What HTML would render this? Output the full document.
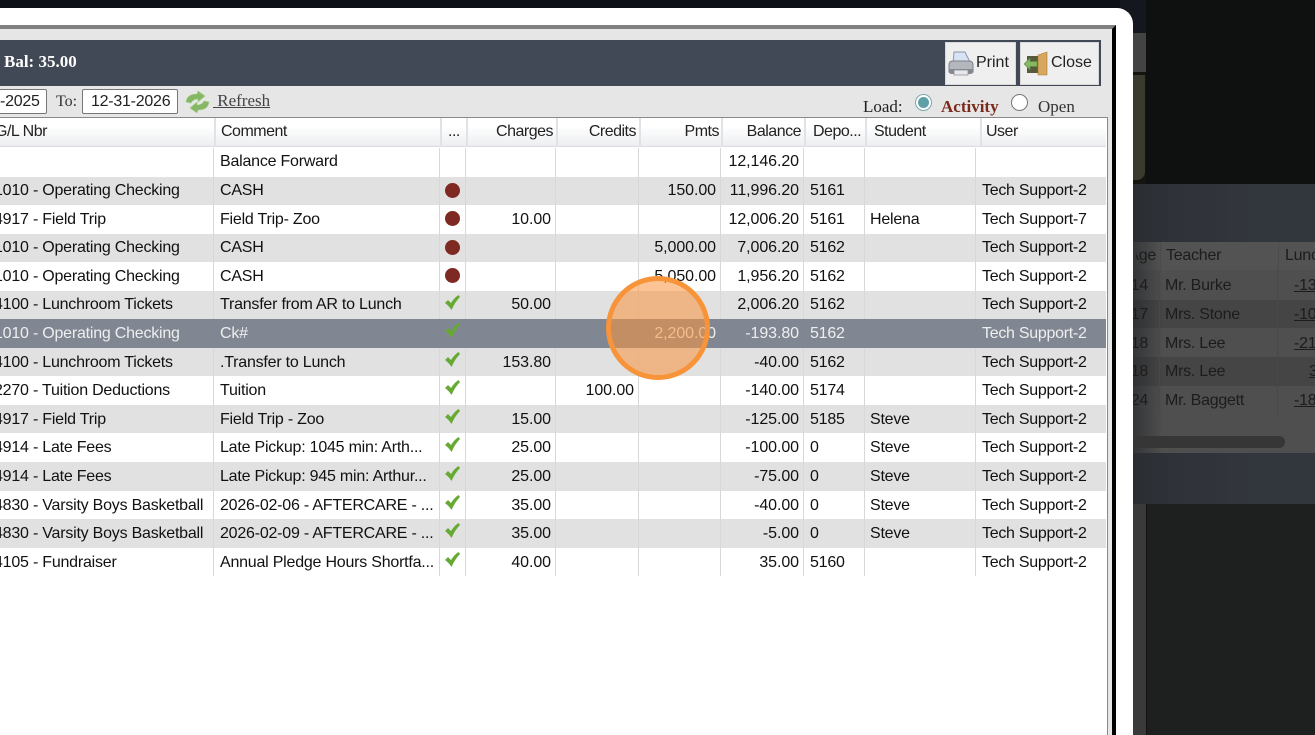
<!DOCTYPE html>
<html><head><meta charset="utf-8"><style>
html,body{margin:0;padding:0;width:1315px;height:735px;overflow:hidden;background:#0f1110}
*{box-sizing:border-box}
.a{position:absolute}
#page{position:relative;width:1315px;height:735px;overflow:hidden;font-family:"Liberation Sans",sans-serif;font-size:16px;color:#111}
.s{font-family:"Liberation Serif",serif;font-size:17px}
.r{position:absolute;left:0;width:1106px;height:29px;background:#fff}
.r.g{background:#e1e1e1}
.r.sel{background:#808793;color:#eee}
.r span{position:absolute;top:4px;line-height:20px;white-space:nowrap;letter-spacing:-.22px}
.r.d span{top:5px}
.c1{left:-6px}.c2{left:220px}
.c4{right:555px}.c5{right:472px}.c6{right:390px}.c7{right:307px}
.r .c4,.r .c5,.r .c6,.r .c7{letter-spacing:-.08px}
.c8{left:810px}.c9{left:870px}.c10{left:982px}
.r .c10{letter-spacing:-.28px}
.vl{position:absolute;top:148px;width:1px;height:428px;background:#d8d8dc}
.h{position:absolute;top:122px;line-height:20px;white-space:nowrap;color:#222;letter-spacing:-.5px}
.hs{position:absolute;top:118px;width:2px;height:29px;background:#dfe2e6}
.dot{position:absolute;left:445px;top:6px;width:15px;height:15px;border-radius:50%;background:#7e2a22}
.r svg{position:absolute;left:444px;top:3px}
.btn{position:absolute;top:42px;height:43px;background:#efefef;border:1px solid #d8d8d8}
.bk{position:absolute;white-space:nowrap;color:#222;line-height:20px}
.br{position:absolute;left:1133px;width:182px}
.p{color:#1c1c1c!important;letter-spacing:-.25px}
</style></head><body><div id="page">

<!-- background right -->
<div class="a" style="left:0;top:0;width:1315px;height:8px;background:#0d1017"></div>
<div class="a" style="left:1120px;top:0;width:26px;height:33px;background:#14171d"></div>
<div class="a" style="left:1133px;top:33px;width:13px;height:39px;background:#434343"></div>
<div class="a" style="left:1120px;top:72px;width:26px;height:112px;background:#14150f"></div>
<div class="a" style="left:1120px;top:75px;width:25px;height:105px;background:#3a3a2f;border-radius:0 0 8px 0"></div>
<div class="a" style="left:1146px;top:0;width:169px;height:184px;background:#0f1110"></div>
<div class="br" style="top:184px;height:320px;background:linear-gradient(90deg,#2a2d32 0,#2f3238 40px,#32363d 120px)"></div>
<div class="br" style="top:242px;height:211px;background:#4f4f4f"></div>
<div class="br" style="top:242px;height:28px;background:#535353"></div>
<div class="br" style="top:300px;height:28px;background:#454545"></div>
<div class="br" style="top:357px;height:29px;background:#454545"></div>
<div class="br" style="top:242px;width:30px;height:211px;background:linear-gradient(90deg,rgba(30,32,36,.55),rgba(30,32,36,0))"></div>
<div class="a" style="left:1159px;top:270px;width:1px;height:145px;background:#484848"></div>
<div class="a" style="left:1277px;top:270px;width:1px;height:145px;background:#484848"></div>
<div class="a" style="left:1160px;top:242px;width:1px;height:28px;background:#4c4c4c"></div>
<div class="a" style="left:1278px;top:242px;width:1px;height:28px;background:#4c4c4c"></div>
<div class="a" style="left:1133px;top:436px;width:152px;height:12px;background:#363636;border-radius:0 6px 6px 0"></div>
<div class="bk p" style="left:1136px;top:246px;width:20px;overflow:hidden;direction:rtl">Age</div>
<div class="bk p" style="left:1166px;top:246px">Teacher</div>
<div class="bk p" style="left:1285px;top:246px;width:30px;overflow:hidden">Lunch</div>
<div class="bk p" style="left:1133px;top:276px;width:15px;overflow:hidden;direction:rtl">14</div>
<div class="bk p" style="left:1133px;top:305px;width:15px;overflow:hidden;direction:rtl">17</div>
<div class="bk p" style="left:1133px;top:334px;width:15px;overflow:hidden;direction:rtl">18</div>
<div class="bk p" style="left:1133px;top:362px;width:15px;overflow:hidden;direction:rtl">18</div>
<div class="bk p" style="left:1133px;top:391px;width:15px;overflow:hidden;direction:rtl">24</div>
<div class="bk p" style="left:1165px;top:276px">Mr. Burke</div>
<div class="bk p" style="left:1165px;top:305px">Mrs. Stone</div>
<div class="bk p" style="left:1165px;top:334px">Mrs. Lee</div>
<div class="bk p" style="left:1165px;top:362px">Mrs. Lee</div>
<div class="bk p" style="left:1165px;top:391px">Mr. Baggett</div>
<div class="bk p" style="left:1294px;top:276px;text-decoration:underline">-13</div>
<div class="bk p" style="left:1294px;top:305px;text-decoration:underline">-10</div>
<div class="bk p" style="left:1294px;top:334px;text-decoration:underline">-21</div>
<div class="bk p" style="left:1309px;top:362px;text-decoration:underline">3</div>
<div class="bk p" style="left:1294px;top:391px;text-decoration:underline">-18</div>
<div class="a" style="left:1133px;top:504px;width:13px;height:231px;background:#3a3a3a"></div>
<div class="a" style="left:1146px;top:504px;width:169px;height:231px;background:#1e1f1f;border-left:1px solid #141414"></div>

<!-- white modal -->
<div class="a" style="left:-20px;top:8px;width:1153px;height:740px;background:#fff;border-radius:0 16px 0 0"></div>
<!-- dialog -->
<div class="a" style="left:-5px;top:25px;width:1121px;height:720px;background:#e6e6e6;border-top:4px solid #808080;border-right:4px solid #000"></div>
<div class="a" style="left:0;top:40px;width:1101px;height:46px;background:#404955"></div>
<div class="a s" style="left:4px;top:52px;color:#fff;font-weight:bold;line-height:20px">Bal: 35.00</div>

<div class="btn" style="left:945px;width:71px"></div>
<div class="btn" style="left:1020px;width:79px"></div>
<svg class="a" style="left:948px;top:50px" width="26" height="27" viewBox="0 0 26 27">
<path d="M6 2h11l4 8v5H5z" fill="#d7e2f4" stroke="#8a97ad"/>
<path d="M1 15q0-4 4-4h16q4 0 4 4v7H1z" fill="#b4b7bd" stroke="#7c7f86"/>
<path d="M1 19h24v3q0 2-3 2H4q-3 0-3-2z" fill="#85888e"/>
<rect x="6" y="20" width="14" height="5" fill="#e6e8ec" stroke="#85888e" stroke-width=".7"/>
</svg>
<div class="bk" style="left:976px;top:53px;color:#222">Print</div>
<svg class="a" style="left:1024px;top:50px" width="24" height="26" viewBox="0 0 24 26">
<path d="M3 6h12v17H3z" fill="#58583a"/>
<path d="M14 5l9-3v23h-9z" fill="#d6a75c" stroke="#a87a34" stroke-width=".6"/>
<path d="M0 14l6-6v3.500h7v5H6V20z" fill="#86b963" stroke="#5b8a40" stroke-width=".6"/>
</svg>
<div class="bk" style="left:1051px;top:53px;color:#222">Close</div>

<!-- toolbar -->
<div class="a" style="left:-10px;top:89px;width:57px;height:25px;background:#fff;border:1px solid #777;border-radius:2px"></div>
<div class="bk" style="left:0;top:92px;letter-spacing:-.25px">-2025</div>
<div class="bk s" style="left:56px;top:92px;color:#333;font-size:16px">To:</div>
<div class="a" style="left:82px;top:89px;width:96px;height:25px;background:#fff;border:1px solid #777;border-radius:2px"></div>
<div class="bk" style="left:91px;top:92px;letter-spacing:-.25px">12-31-2026</div>
<svg class="a" style="left:185px;top:90px" width="25" height="24" viewBox="0 0 25 24">
<path d="M1 12q1-8 11-8l1-3 7 5-7 6v-3q-5 0-7 4z" fill="#86b765" stroke="#a6cf8b" stroke-width=".6"/>
<path d="M24 12q-1 8-11 8l-1 3-7-5 7-6v3q5 0 7-4z" fill="#86b765" stroke="#a6cf8b" stroke-width=".6"/>
</svg>
<div class="bk s" style="left:213px;top:91px;color:#444;text-decoration:underline;white-space:pre"> Refresh</div>
<div class="bk s" style="left:863px;top:97px;color:#222">Load:</div>
<div class="a" style="left:915px;top:94px;width:17px;height:17px;border-radius:50%;background:#fff;border:1px solid #7aa;box-shadow:inset 0 0 0 2px #fff"></div>
<div class="a" style="left:918px;top:97px;width:11px;height:11px;border-radius:50%;background:#5f9fa8"></div>
<div class="bk s" style="left:941px;top:97px;color:#7a2a1a;font-weight:bold">Activity</div>
<div class="a" style="left:1011px;top:94px;width:17px;height:17px;border-radius:50%;background:#fff;border:1px solid #777"></div>
<div class="bk s" style="left:1038px;top:97px;color:#333">Open</div>

<!-- table frame -->
<div class="a" style="left:0;top:117px;width:1108px;height:620px;background:#fff;border-top:1px solid #8a8a8a;border-right:1px solid #8a8a8a"></div>
<div class="a" style="left:0;top:118px;width:1106px;height:29px;background:linear-gradient(#fff 0,#fff 30%,#eceef1 100%);border-bottom:1px solid #dcdcdc"></div>
<div class="hs" style="left:214px"></div><div class="hs" style="left:440px"></div><div class="hs" style="left:466px"></div><div class="hs" style="left:556px"></div><div class="hs" style="left:639px"></div><div class="hs" style="left:721px"></div><div class="hs" style="left:804px"></div><div class="hs" style="left:865px"></div><div class="hs" style="left:980px"></div>
<div class="h" style="left:-5px">G/L Nbr</div>
<div class="h" style="left:221px">Comment</div>
<div class="h" style="left:448px">...</div>
<div class="h" style="right:762px">Charges</div>
<div class="h" style="right:679px">Credits</div>
<div class="h" style="right:596px">Pmts</div>
<div class="h" style="right:514px">Balance</div>
<div class="h" style="left:813px;width:50px;overflow:hidden">Depo...</div>
<div class="h" style="left:874px">Student</div>
<div class="h" style="left:986px">User</div>

<!-- rows -->
<div class="r" style="top:148px"><span class="c2">Balance Forward</span><span class="c7">12,146.20</span></div>
<div class="r g" style="top:177px;height:28px"><span class="c1">1010 - Operating Checking</span><span class="c2">CASH</span><i class="dot"></i><span class="c6">150.00</span><span class="c7">11,996.20</span><span class="c8">5161</span><span class="c10">Tech Support-2</span></div>
<div class="r d" style="top:205px"><span class="c1">4917 - Field Trip</span><span class="c2">Field Trip- Zoo</span><i class="dot"></i><span class="c4">10.00</span><span class="c7">12,006.20</span><span class="c8">5161</span><span class="c9">Helena</span><span class="c10">Tech Support-7</span></div>
<div class="r g" style="top:234px;height:28px"><span class="c1">1010 - Operating Checking</span><span class="c2">CASH</span><i class="dot"></i><span class="c6">5,000.00</span><span class="c7">7,006.20</span><span class="c8">5162</span><span class="c10">Tech Support-2</span></div>
<div class="r d" style="top:262px"><span class="c1">1010 - Operating Checking</span><span class="c2">CASH</span><i class="dot"></i><span class="c6">5,050.00</span><span class="c7">1,956.20</span><span class="c8">5162</span><span class="c10">Tech Support-2</span></div>
<div class="r g" style="top:291px;height:28px"><span class="c1">4100 - Lunchroom Tickets</span><span class="c2">Transfer from AR to Lunch</span><svg width="17" height="17" viewBox="0 0 17 17"><path d="M1 9l3-3 3 3Q10 4 14.500 1L16 3Q11 8 7.500 16 5 12 1 9z" fill="#66aa33"/></svg><span class="c4">50.00</span><span class="c7">2,006.20</span><span class="c8">5162</span><span class="c10">Tech Support-2</span></div>
<div class="r g d" style="top:348px;height:28px"><span class="c1">4100 - Lunchroom Tickets</span><span class="c2">.Transfer to Lunch</span><svg width="17" height="17" viewBox="0 0 17 17"><path d="M1 9l3-3 3 3Q10 4 14.500 1L16 3Q11 8 7.500 16 5 12 1 9z" fill="#66aa33"/></svg><span class="c4">153.80</span><span class="c7">-40.00</span><span class="c8">5162</span><span class="c10">Tech Support-2</span></div>
<div class="r d" style="top:376px"><span class="c1">2270 - Tuition Deductions</span><span class="c2">Tuition</span><svg width="17" height="17" viewBox="0 0 17 17"><path d="M1 9l3-3 3 3Q10 4 14.500 1L16 3Q11 8 7.500 16 5 12 1 9z" fill="#66aa33"/></svg><span class="c5">100.00</span><span class="c7">-140.00</span><span class="c8">5174</span><span class="c10">Tech Support-2</span></div>
<div class="r g d" style="top:405px;height:28px"><span class="c1">4917 - Field Trip</span><span class="c2">Field Trip - Zoo</span><svg width="17" height="17" viewBox="0 0 17 17"><path d="M1 9l3-3 3 3Q10 4 14.500 1L16 3Q11 8 7.500 16 5 12 1 9z" fill="#66aa33"/></svg><span class="c4">15.00</span><span class="c7">-125.00</span><span class="c8">5185</span><span class="c9">Steve</span><span class="c10">Tech Support-2</span></div>
<div class="r d" style="top:433px"><span class="c1">4914 - Late Fees</span><span class="c2">Late Pickup: 1045 min: Arth...</span><svg width="17" height="17" viewBox="0 0 17 17"><path d="M1 9l3-3 3 3Q10 4 14.500 1L16 3Q11 8 7.500 16 5 12 1 9z" fill="#66aa33"/></svg><span class="c4">25.00</span><span class="c7">-100.00</span><span class="c8">0</span><span class="c9">Steve</span><span class="c10">Tech Support-2</span></div>
<div class="r g d" style="top:462px"><span class="c1">4914 - Late Fees</span><span class="c2">Late Pickup: 945 min: Arthur...</span><svg width="17" height="17" viewBox="0 0 17 17"><path d="M1 9l3-3 3 3Q10 4 14.500 1L16 3Q11 8 7.500 16 5 12 1 9z" fill="#66aa33"/></svg><span class="c4">25.00</span><span class="c7">-75.00</span><span class="c8">0</span><span class="c9">Steve</span><span class="c10">Tech Support-2</span></div>
<div class="r d" style="top:491px;height:28px"><span class="c1">4830 - Varsity Boys Basketball</span><span class="c2">2026-02-06 - AFTERCARE - ...</span><svg width="17" height="17" viewBox="0 0 17 17"><path d="M1 9l3-3 3 3Q10 4 14.500 1L16 3Q11 8 7.500 16 5 12 1 9z" fill="#66aa33"/></svg><span class="c4">35.00</span><span class="c7">-40.00</span><span class="c8">0</span><span class="c9">Steve</span><span class="c10">Tech Support-2</span></div>
<div class="r g d" style="top:519px"><span class="c1">4830 - Varsity Boys Basketball</span><span class="c2">2026-02-09 - AFTERCARE - ...</span><svg width="17" height="17" viewBox="0 0 17 17"><path d="M1 9l3-3 3 3Q10 4 14.500 1L16 3Q11 8 7.500 16 5 12 1 9z" fill="#66aa33"/></svg><span class="c4">35.00</span><span class="c7">-5.00</span><span class="c8">0</span><span class="c9">Steve</span><span class="c10">Tech Support-2</span></div>
<div class="r d" style="top:548px;height:28px"><span class="c1">4105 - Fundraiser</span><span class="c2">Annual Pledge Hours Shortfa...</span><svg width="17" height="17" viewBox="0 0 17 17"><path d="M1 9l3-3 3 3Q10 4 14.500 1L16 3Q11 8 7.500 16 5 12 1 9z" fill="#66aa33"/></svg><span class="c4">40.00</span><span class="c7">35.00</span><span class="c8">5160</span><span class="c10">Tech Support-2</span></div>

<div class="vl" style="left:213px"></div><div class="vl" style="left:439px"></div><div class="vl" style="left:465px"></div><div class="vl" style="left:555px"></div><div class="vl" style="left:638px"></div><div class="vl" style="left:720px"></div><div class="vl" style="left:803px"></div><div class="vl" style="left:864px"></div><div class="vl" style="left:975px"></div>

<div class="r sel d" style="top:319px"><span class="c1">1010 - Operating Checking</span><span class="c2">Ck#</span><svg width="17" height="17" viewBox="0 0 17 17"><path d="M1 9l3-3 3 3Q10 4 14.500 1L16 3Q11 8 7.500 16 5 12 1 9z" fill="#66aa33"/></svg><span class="c6">2,200.00</span><span class="c7">-193.80</span><span class="c8">5162</span><span class="c10">Tech Support-2</span></div>

<!-- highlight -->
<div class="a" style="left:606px;top:276px;width:104px;height:104px;border-radius:50%;background:rgba(250,148,60,.55);border:5px solid #f7943a"></div>
</div></body></html>
